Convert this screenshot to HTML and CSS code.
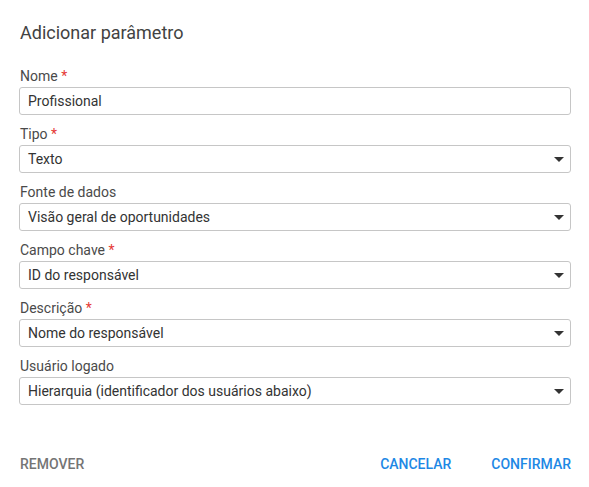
FILE: index.html
```html
<!DOCTYPE html>
<html lang="pt">
<head>
<meta charset="utf-8">
<link rel="stylesheet" href="styles.css">
</head>
<body>
<div class="dialog">
  <h1 class="title">Adicionar parâmetro</h1>
  <div class="fields">
    <div class="field">
      <label class="label">Nome <span class="req">*</span></label>
      <div class="input"><span class="value">Profissional</span></div>
    </div>
    <div class="field">
      <label class="label">Tipo <span class="req">*</span></label>
      <div class="input select"><span class="value">Texto</span><span class="caret"></span></div>
    </div>
    <div class="field">
      <label class="label">Fonte de dados</label>
      <div class="input select"><span class="value">Visão geral de oportunidades</span><span class="caret"></span></div>
    </div>
    <div class="field">
      <label class="label">Campo chave <span class="req">*</span></label>
      <div class="input select"><span class="value">ID do responsável</span><span class="caret"></span></div>
    </div>
    <div class="field">
      <label class="label">Descrição <span class="req">*</span></label>
      <div class="input select"><span class="value">Nome do responsável</span><span class="caret"></span></div>
    </div>
    <div class="field">
      <label class="label">Usuário logado</label>
      <div class="input select"><span class="value">Hierarquia (identificador dos usuários abaixo)</span><span class="caret"></span></div>
    </div>
  </div>
  <div class="actions">
    <button class="btn btn-muted">REMOVER</button>
    <div class="actions-right">
      <button class="btn btn-primary">CANCELAR</button>
      <button class="btn btn-primary">CONFIRMAR</button>
    </div>
  </div>
</div>
</body>
</html>
```
FILE: styles.css
```css
* { box-sizing: border-box; }
html, body { margin: 0; padding: 0; background: #fff; }
body { font-family: Roboto, "Liberation Sans", sans-serif; color: #333; }
.dialog {
  width: 589px;
  padding: 21px 18px 0 19px;
}
.title {
  margin: 0 0 0 1px;
  font-size: 18px;
  line-height: 24px;
  font-weight: 400;
  color: #424242;
}
.fields {
  margin-top: 23px;
  display: flex;
  flex-direction: column;
  gap: 11px;
}
.field { display: flex; flex-direction: column; }
.label {
  display: block;
  margin-left: 1px;
  font-size: 14px;
  line-height: 16px;
  color: #4a4a4a;
  margin-bottom: 3px;
}
.req { color: #e53935; }
.input {
  height: 28px;
  border: 1px solid #c6c6c6;
  border-radius: 3px;
  display: flex;
  align-items: center;
  padding: 0 6px 0 8px;
  font-size: 14px;
  color: #333;
}
.value { flex: 1; white-space: nowrap; }
.caret {
  width: 0;
  height: 0;
  border-left: 5px solid transparent;
  border-right: 5px solid transparent;
  border-top: 5px solid #333;
}
.actions {
  margin-top: 41px;
  height: 36px;
  display: flex;
  align-items: center;
  justify-content: space-between;
  padding-left: 1px;
}
.actions-right { display: flex; gap: 40px; }
.btn {
  background: none;
  border: none;
  padding: 0;
  font-family: Roboto, "Liberation Sans", sans-serif;
  font-size: 14px;
  font-weight: 500;
  cursor: pointer;
}
.btn-muted { color: #757575; }
.btn-primary { color: #1e88e5; }
```
